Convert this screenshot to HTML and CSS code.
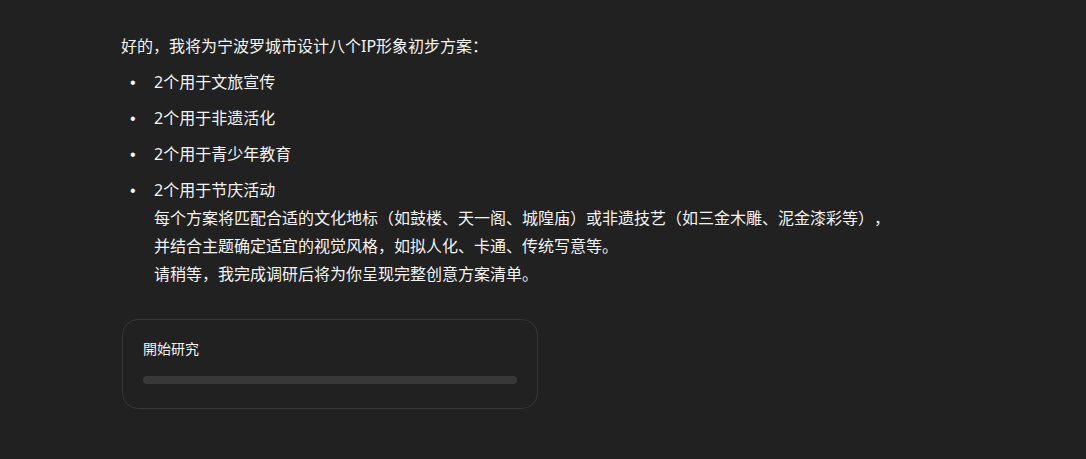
FILE: index.html
```html
<!DOCTYPE html>
<html lang="zh">
<head>
<meta charset="utf-8">
<link rel="stylesheet" href="styles.css">
</head>
<body>
<main class="content">
  <p class="intro">好的，我将为宁波罗城市设计八个IP形象初步方案：</p>
  <ul class="plan">
    <li>2个用于文旅宣传</li>
    <li>2个用于非遗活化</li>
    <li>2个用于青少年教育</li>
    <li>2个用于节庆活动<br>每个方案将匹配合适的文化地标（如鼓楼、天一阁、城隍庙）或非遗技艺（如三金木雕、泥金漆彩等），<br>并结合主题确定适宜的视觉风格，如拟人化、卡通、传统写意等。<br>请稍等，我完成调研后将为你呈现完整创意方案清单。</li>
  </ul>
  <section class="card">
    <div class="card-title">開始研究</div>
    <div class="progress"></div>
  </section>
</main>
</body>
</html>
```

FILE: styles.css
```css
html, body {
  margin: 0;
  background: #212121;
}
body {
  font-family: "Noto Sans", "Noto Sans CJK SC", sans-serif;
  color: #f3f3f3;
  font-size: 16px;
  text-spacing-trim: space-all;
}
.content {
  padding: 32px 0 0 121px;
}
.intro {
  margin: 0;
  line-height: 28px;
}
.plan {
  margin: 0;
  padding-left: 33px;
  line-height: 28px;
  list-style: none;
}
.plan li {
  margin-top: 8px;
}
.plan li::before {
  content: "•";
  display: inline-block;
  width: 24px;
  margin-left: -24px;
  font-family: "Liberation Sans", sans-serif;
  line-height: 1;
}
.card {
  margin-top: 31px;
  margin-left: 1px;
  width: 374px;
  padding: 19px 20px 24px;
  border: 1px solid #363636;
  border-radius: 16px;
}
.card-title {
  font-size: 14px;
  line-height: 20px;
}
.progress {
  margin-top: 17px;
  height: 8px;
  border-radius: 4px;
  background: #383838;
}
```
